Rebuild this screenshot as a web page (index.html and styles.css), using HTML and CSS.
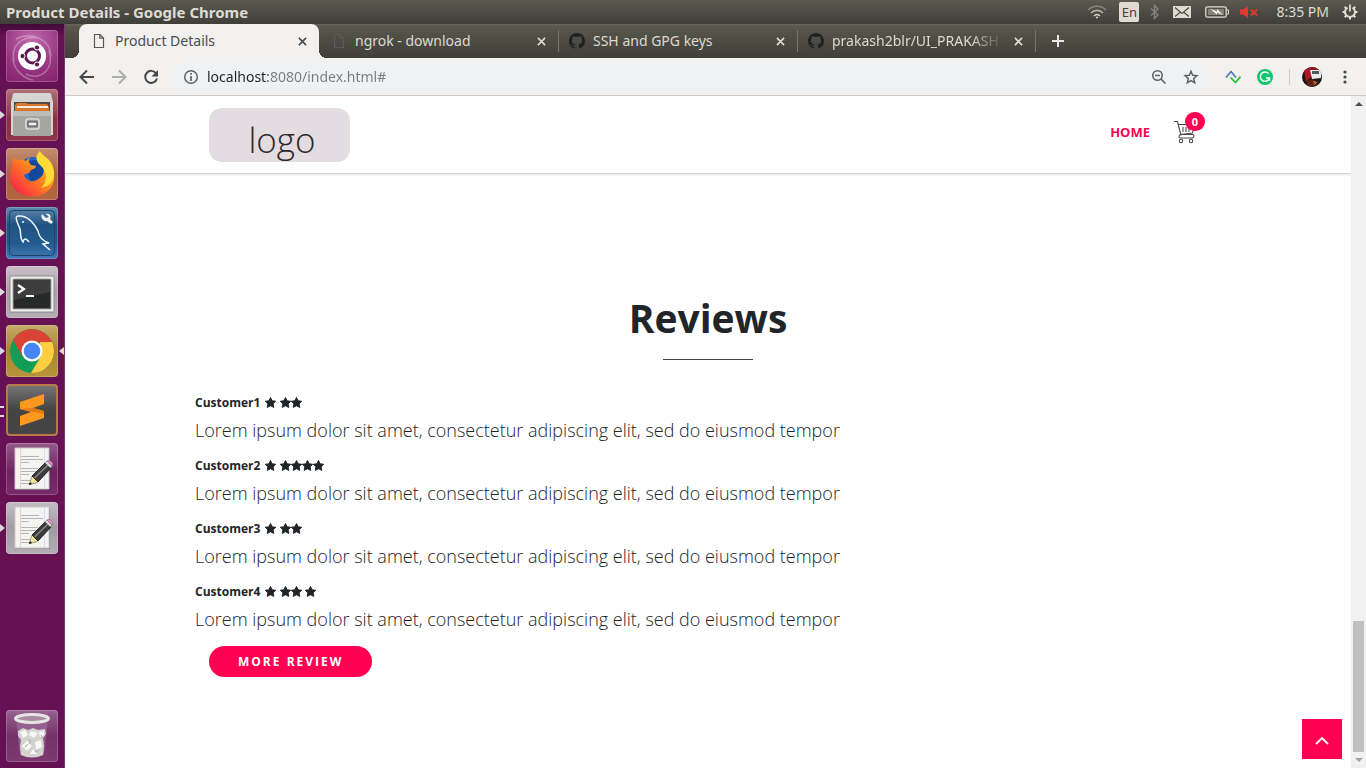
FILE: index.html
```html
<!DOCTYPE html>
<html lang="en">
<head>
<meta charset="utf-8">
<title>Product Details</title>
<link rel="stylesheet" href="styles.css">
</head>
<body>
<svg class="defs" aria-hidden="true">
  <defs>
    <symbol id="star" viewBox="0 0 24 24"><path d="M12 1l3.600 7.200 7.900 1.100-5.700 5.600 1.400 7.900L12 19.100l-7.200 3.700 1.400-7.900L.5 9.300l7.900-1.100z" stroke="#212529" stroke-width="2" stroke-linejoin="round"/></symbol>
    <symbol id="close" viewBox="0 0 10 10"><path d="M1 1l8 8M9 1L1 9" fill="none" stroke="currentColor" stroke-width="1.8"/></symbol>
    <symbol id="file" viewBox="0 0 12 16"><path d="M1.5 1.5h5.5l3.5 3.5v9.5h-9zM6.8 1.5v3.7h3.7" fill="none" stroke="currentColor" stroke-width="1.2"/></symbol>
    <symbol id="github" viewBox="0 0 16 16"><path d="M8 0C3.58 0 0 3.58 0 8c0 3.54 2.29 6.53 5.47 7.59.4.07.55-.17.55-.38v-1.49c-2.23.48-2.7-1.07-2.7-1.07-.36-.92-.89-1.17-.89-1.17-.73-.5.05-.49.05-.49.81.06 1.23.83 1.23.83.72 1.23 1.88.87 2.33.66.07-.52.28-.87.51-1.07-1.78-.2-3.64-.89-3.64-3.95 0-.87.31-1.59.82-2.15-.08-.2-.36-1.02.08-2.12 0 0 .67-.21 2.2.82a7.6 7.6 0 014 0c1.53-1.04 2.2-.82 2.2-.82.44 1.1.16 1.92.08 2.12.51.56.82 1.27.82 2.15 0 3.07-1.87 3.75-3.65 3.95.29.25.54.73.54 1.48v2.2c0 .21.15.46.55.38A8 8 0 0016 8c0-4.42-3.58-8-8-8z" fill="currentColor"/></symbol>
    <symbol id="notepad" viewBox="0 0 52 52">
      <path d="M9 6h35v41H9z" fill="#000" opacity=".25"/>
      <path d="M9 5h34v41H9z" fill="#f4f4f2" stroke="#c9c9c9"/>
      <path d="M14.500 5v41" stroke="#f5cccc"/><path d="M38.500 5v41" stroke="#d3dbf2"/>
      <path d="M15 13.500h18M15 16.500h22M15 19.500h8M15 25.500h17M15 28.500h18M15 31.500h8M15 37.500h14M15 40.500h15" stroke="#b5b5b5" stroke-width="1"/>
      <path d="M23 42l3-9 6 6z" fill="#efe3a0" stroke="#77734c" stroke-width=".6"/>
      <path d="M23 42l1-3 2 2z" fill="#111"/>
      <path d="M26 33L39 20l6 5-13 14z" fill="#3a3a3a" stroke="#111" stroke-width=".8"/><path d="M28.500 35L42 22" stroke="#888" stroke-width="1.500"/>
      <path d="M39 20l2-2 5 5-1.500 2z" fill="#ddd" stroke="#666" stroke-width=".6"/>
      <path d="M41 18c2-2 7 2 5.500 5z" fill="#e9a0d0" stroke="#a56490" stroke-width=".8"/>
    </symbol>
  </defs>
</svg>

<header class="panel">
  <span class="panel-title">Product Details - Google Chrome</span>
  <div class="indicators">
    <svg width="20" height="16" viewBox="0 0 20 16" fill="none" stroke-width="1.6"><path d="M1 6c5-5 13-5 18 0" stroke="#85837b"/><path d="M4 9c3.500-3.500 8.500-3.500 12 0" stroke="#b9b6ac"/><path d="M7 12c2-2 4-2 6 0" stroke="#dfdbd2"/><circle cx="10" cy="13.500" r="1" fill="#dfdbd2" stroke="none"/></svg>
    <span class="lang">En</span>
    <svg width="9" height="16" viewBox="0 0 9 16" fill="none" stroke="#85837b" stroke-width="1.400"><path d="M1 4.500l7 6.500-3.500 3.500v-13L8 5 1 11.500"/></svg>
    <svg class="mail" width="18" height="12" viewBox="0 0 18 12"><path d="M0 0h18v12H0z" fill="#dfdbd2"/><path d="M2 1.500l7 6 7-6M2 10.500l5-4M16 10.500l-5-4" fill="none" stroke="#4a4943" stroke-width="1.200"/></svg>
    <svg class="battery" width="24" height="12" viewBox="0 0 24 12"><rect x=".8" y=".8" width="20.400" height="10.400" rx="1.500" fill="none" stroke="#dfdbd2" stroke-width="1.300"/><path d="M22 4h1.500v4H22" fill="none" stroke="#dfdbd2"/><path d="M3 3h16v6H3z" fill="#85837b"/><path d="M5 2.500l7 3V2.800l6 6.500-6-2.800v2.300z" fill="#f1eee6"/></svg>
    <svg class="mute" width="18" height="12" viewBox="0 0 18 12"><path d="M0 3.500h3L8 0v12L3 8.500H0z" fill="#df382c"/><path d="M11 3.500l6 6m0-6l-6 6" stroke="#df382c" stroke-width="2"/></svg>
    <span class="clock">8:35 PM</span>
    <svg class="gear" width="16" height="16" viewBox="0 0 16 16" fill="none" stroke="#dfdbd2"><path d="M5.500 3.600a5 5 0 1 0 5 0" stroke-width="2"/><path d="M8 .5v7" stroke-width="1.800"/><path d="M.5 8H3m10 0h2.500M8 13v2.500M2.700 2.700l1.800 1.800m7 7l1.800 1.800m0-10.600l-1.800 1.800m-7 7l-1.800 1.800" stroke-width="2"/></svg>
  </div>
</header>

<div class="desktop">
  <nav class="launcher" aria-label="Launcher">
    <button class="tile ubuntu" aria-label="Dash"><svg viewBox="0 0 52 52"><g fill="none" stroke="#fff" opacity=".3"><path d="M8 32C4 15 17 5 32 8M20 44C35 52 49 38 43 20M10 9c15-8 34 0 35 17M7 28c0 12 12 21 20 22" stroke-width="1.500"/></g><circle cx="26" cy="26" r="14" fill="#fff"/><circle cx="26.500" cy="26" r="7" fill="none" stroke="#5e1750" stroke-width="3"/><g fill="#5e1750" stroke="#fff" stroke-width="1"><circle cx="16.500" cy="26" r="2.600"/><circle cx="31" cy="17.500" r="2.600"/><circle cx="31" cy="34.500" r="2.600"/></g></svg></button>
    <button class="tile files running" aria-label="Files"><svg viewBox="0 0 52 52"><path d="M7 5q0-1 2-1h34q2 0 2 1l2 8v33H5V13z" fill="#d5d5d3"/><path d="M8 13h36v9H8z" fill="#554c45"/><path d="M9 16q1-2 3-2h8l2 1h19l2 3v5H9z" fill="#d9772b"/><path d="M11 17h31v2H11z" fill="#f8ece0"/><path d="M7 22h38v25H7z" fill="#a5a5a3"/><path d="M7 22h38v5H7z" fill="#bcbcba"/><rect x="20" y="30" width="13" height="10" rx="2" fill="#999" stroke="#ddd" stroke-width="1.500"/><path d="M22 33h9v4h-9z" fill="#eee" stroke="#444"/></svg></button>
    <button class="tile firefox running" aria-label="Firefox"><svg viewBox="0 0 52 52"><defs><linearGradient id="ff" x1="1" x2="0" y1="0" y2="1"><stop offset="0" stop-color="#ffda35"/><stop offset=".45" stop-color="#ff8b1c"/><stop offset=".8" stop-color="#ff3a3d"/><stop offset="1" stop-color="#d91475"/></linearGradient></defs><circle cx="27" cy="25" r="16" fill="#1767c6"/><path d="M17 15q8-5 19-2l4 20-13 6z" fill="#12499e"/><path d="M8 9c1 2 2 3 4 3 3-1 6 0 8 1l4-4c-2 4-1 6 1 8l5 1c0 3-4 3-6 5-1 4-4 2-6 4 3 9 13 7 18 1 4-6 0-10-2-12C29 12 30 7 34 3c0 5 10 9 12 17 7 15-4 28-18 28C9 49 0 34 6 20c0-4 0-8 2-11z" fill="url(#ff)"/><path d="M34 3c-4 4-5 9 0 14 8 6 8 16 1 23 17-3 15-20 8-28-4-4-8-6-9-9z" fill="#ffdb36"/></svg></button>
    <button class="tile mysql running" aria-label="MySQL Workbench"><svg viewBox="0 0 52 52"><rect x="3.500" y="3.500" width="45" height="45" rx="4" fill="none" stroke="#1b4468"/><path d="M23 35c-3-4-5-4-6 0-3-3-2-8-3-13-2-5-6-13-2-13 9-1 16 7 20 15 1 7 5 10 11 12l-6 1 7 6" fill="none" stroke="#eef5fb" stroke-width="1.500"/><circle cx="17" cy="15" r="1" fill="#fff"/><path d="M36 7l4 4 3-1-3-3c3-1 6 2 4 5l3 3-2 2-4-3c-3 1-7-3-5-7z" fill="#f1f3f5"/></svg></button>
    <button class="tile terminal running" aria-label="Terminal"><svg viewBox="0 0 52 52"><path d="M4 10h44v36H4z" fill="#efefed" stroke="#8e8c8d"/><path d="M7 13h38v30H7z" fill="#282a29" stroke="#aaa"/><path d="M8 14h36v12L8 34z" fill="#3c3d3c"/><path d="M12 19l6 4-6 4" fill="none" stroke="#fff" stroke-width="2.200"/><path d="M20 30h8" stroke="#fff" stroke-width="2"/></svg></button>
    <button class="tile chrome running active" aria-label="Google Chrome"><svg viewBox="0 0 52 52"><circle cx="26" cy="26" r="22" fill="#129d57"/><path d="M7 15a22 22 0 0 1 39 2H26l-10 14z" fill="#da4336"/><path d="M46 17a22 22 0 0 1-21 31l10-17-1-14z" fill="#ffcd40"/><circle cx="26" cy="26" r="10.500" fill="#fff"/><circle cx="26" cy="26" r="8.300" fill="#4687f4"/></svg></button>
    <button class="tile sublime running double" aria-label="Sublime Text"><svg viewBox="0 0 52 52"><path d="M14 18l24-8v10l-11 4 11 3v7l-24 8V32l11-4-11-3z" fill="#ff9820"/><path d="M14 25l13-1 11 3v3z" fill="#e27a11"/></svg></button>
    <button class="tile editor" aria-label="Text Editor"><svg viewBox="0 0 52 52"><use href="#notepad"/></svg></button>
    <button class="tile editor-open running" aria-label="Document"><svg viewBox="0 0 52 52"><use href="#notepad"/></svg></button>
    <button class="tile trash" aria-label="Trash"><svg viewBox="0 0 52 52"><path d="M10 9h32l-4 36q-12 5-24 0z" fill="#a579a0" opacity=".55"/><path d="M12 21l5-3 5 2 5-2 5 2 7-1 1 5-3 4 1 8-1 9q-11 5-22 0l-1-8 1-7-3-4z" fill="#d3d3d0"/><path d="M14 22l5-2 3 5-5 3zM25 21l7 2-4 5-5-3zM33 22l5-1v5l-4 1zM16 36l5-5 5 5-5 5zM29 32l6-2 1 7-6 3zM24 44l3-5 4 5z" fill="#f8f8f6"/><path d="M22 29l3 2-2 3m12-9l2 4m-18 8l3-3m7 8l4-2" stroke="#aaa" fill="none"/><ellipse cx="26" cy="8.500" rx="16.500" ry="4" fill="#a78ba3" stroke="#e5e5e3" stroke-width="3"/></svg></button>
  </nav>

  <div class="browser">
    <div class="tabs">
      <div class="tab current"><svg class="favicon-file" viewBox="0 0 12 16"><use href="#file"/></svg><button class="tab-name">Product Details</button><button class="tab-close" aria-label="Close tab"><svg><use href="#close"/></svg></button></div>
      <div class="tab"><svg class="favicon-file" viewBox="0 0 12 16"><use href="#file"/></svg><button class="tab-name">ngrok - download</button><button class="tab-close" aria-label="Close tab"><svg><use href="#close"/></svg></button></div>
      <div class="tab"><svg class="favicon-git" viewBox="0 0 16 16"><use href="#github"/></svg><button class="tab-name">SSH and GPG keys</button><button class="tab-close" aria-label="Close tab"><svg><use href="#close"/></svg></button></div>
      <div class="tab"><svg class="favicon-git" viewBox="0 0 16 16"><use href="#github"/></svg><button class="tab-name fade">prakash2blr/UI_PRAKASH</button><button class="tab-close" aria-label="Close tab"><svg><use href="#close"/></svg></button></div>
      <button class="new-tab" aria-label="New tab"><svg viewBox="0 0 12 12"><path d="M6 0v12M0 6h12" stroke="#e9e7df" stroke-width="2"/></svg></button>
    </div>

    <div class="toolbar">
      <button aria-label="Back"><svg viewBox="0 0 16 16"><path d="M15 8H2M8 1.500L1.500 8 8 14.500" fill="none" stroke="#474747" stroke-width="2"/></svg></button>
      <button aria-label="Forward"><svg viewBox="0 0 16 16"><path d="M1 8h13M8 1.500L14.500 8 8 14.500" fill="none" stroke="#adadab" stroke-width="2"/></svg></button>
      <button aria-label="Reload"><svg viewBox="0 0 16 16"><path d="M13.200 4.500A6 6 0 1 0 14 9.500" fill="none" stroke="#474747" stroke-width="2"/><path d="M15 1v6.500H8.500z" fill="#474747"/></svg></button>
      <div class="address">
        <button aria-label="Site information"><svg viewBox="0 0 16 16"><circle cx="8" cy="8" r="6.300" fill="none" stroke="#5f6368" stroke-width="1.500"/><path d="M8 7v5M8 4v1.800" stroke="#5f6368" stroke-width="1.700"/></svg></button>
        <input class="url" type="text" aria-label="Address" value="localhost:8080/index.html#">
        <button aria-label="Zoom"><svg viewBox="0 0 16 16" fill="none" stroke="#5f6368" stroke-width="1.600"><circle cx="6.500" cy="6.500" r="4.700"/><path d="M10 10l4.500 4.500M4 6.500h5"/></svg></button>
        <button class="bookmark" aria-label="Bookmark"><svg viewBox="0 0 16 16"><path d="M8 2.200l1.700 4 4.300.4-3.300 2.900 1 4.200L8 11.500l-3.700 2.200 1-4.200L2 6.600l4.300-.4z" fill="none" stroke="#5f6368" stroke-width="1.500"/></svg></button>
      </div>
      <div class="extensions">
        <button aria-label="Extension"><svg viewBox="0 0 16 16" fill="none" stroke-width="1.700"><path d="M1 8.500l5-6 5 6" stroke="#5577b8"/><path d="M5.500 8.500l5 5 5-6" stroke="#18c522"/></svg></button>
        <button class="grammarly" aria-label="Grammarly"><svg viewBox="0 0 16 16"><circle cx="8" cy="8" r="8" fill="#11c46e"/><path d="M11.500 4.500A4.700 4.700 0 1 0 12.500 9H9M12.500 8.500v3.200" fill="none" stroke="#fff" stroke-width="1.500"/></svg></button>
        <span class="divider"></span>
        <button class="avatar" aria-label="Profile"><svg viewBox="0 0 20 20"><defs><clipPath id="round"><circle cx="10" cy="10" r="10"/></clipPath></defs><g clip-path="url(#round)"><path d="M0 0h20v20H0z" fill="#16191b"/><path d="M2 3l7-3v10l-5 5z" fill="#ae1724"/><path d="M9 0h11v3H8z" fill="#8c1620"/><path d="M8 3l11 0v8l-9 1z" fill="#e9eaec"/><path d="M10 4h7v3h-7z" fill="#50565c"/><path d="M4 14l6-2 4 2 2 6H6z" fill="#5a2412"/><path d="M11 14l5 1-4 3z" fill="#c06030"/></g></svg></button>
        <button aria-label="Menu"><svg viewBox="0 0 16 16" fill="#474747"><circle cx="8" cy="3" r="1.600"/><circle cx="8" cy="8" r="1.600"/><circle cx="8" cy="13" r="1.600"/></svg></button>
      </div>
    </div>

    <div class="viewport">
      <div class="page">
        <header class="site-header">
          <div class="container header-row">
            <a class="logo" href="#">logo</a>
            <nav class="site-nav">
              <a class="home" href="#">HOME</a>
              <a class="cart" href="#" aria-label="Cart"><svg viewBox="0 0 22 24" fill="none" stroke="#47494e" stroke-width="1.100"><path d="M0 1.500h3.500L7 15.500M4.300 4.500h16L18.500 13 6.500 14.500h12q1.500 0 1.500 1.500t-1.500 2h-12q-1.500 0-1.500-1.500t1.500-2M9 7v5M12 7v5M15 7v5"/><circle cx="7" cy="21" r="1.700"/><circle cx="17" cy="21" r="1.700"/></svg><span class="badge">0</span></a>
            </nav>
          </div>
        </header>
        <main class="container reviews">
          <h1>Reviews</h1>
          <article><h2>Customer1 <span class="stars"><svg><use href="#star"/></svg> <svg><use href="#star"/></svg><svg><use href="#star"/></svg></span></h2><p>Lorem ipsum dolor sit amet, consectetur adipiscing elit, sed do eiusmod tempor</p></article>
          <article><h2>Customer2 <span class="stars"><svg><use href="#star"/></svg> <svg><use href="#star"/></svg><svg><use href="#star"/></svg><svg><use href="#star"/></svg><svg><use href="#star"/></svg></span></h2><p>Lorem ipsum dolor sit amet, consectetur adipiscing elit, sed do eiusmod tempor</p></article>
          <article><h2>Customer3 <span class="stars"><svg><use href="#star"/></svg> <svg><use href="#star"/></svg><svg><use href="#star"/></svg></span></h2><p>Lorem ipsum dolor sit amet, consectetur adipiscing elit, sed do eiusmod tempor</p></article>
          <article><h2>Customer4 <span class="stars"><svg><use href="#star"/></svg> <svg><use href="#star"/></svg><svg><use href="#star"/></svg> <svg><use href="#star"/></svg></span></h2><p>Lorem ipsum dolor sit amet, consectetur adipiscing elit, sed do eiusmod tempor</p></article>
          <button class="more">MORE REVIEW</button>
        </main>
        <a class="to-top" href="#" aria-label="Back to top"><svg viewBox="0 0 14 8"><path d="M1 7l6-6 6 6" fill="none" stroke="#fff" stroke-width="1.800"/></svg></a>
      </div>
      <div class="scrollbar">
        <button aria-label="Scroll up"><svg viewBox="0 0 8 4"><path d="M0 4l4-4 4 4z" fill="#505050"/></svg></button>
        <div class="track"><div class="thumb"></div></div>
        <button aria-label="Scroll down"><svg viewBox="0 0 8 4"><path d="M0 0l4 4 4-4z" fill="#a0a0a0"/></svg></button>
      </div>
    </div>
  </div>
</div>
</body>
</html>
```
FILE: styles.css
```css
* { box-sizing: border-box; }
body {
  margin: 0;
  height: 100vh;
  display: flex;
  flex-direction: column;
  overflow: hidden;
  font-family: "Open Sans", "Noto Sans", sans-serif;
  color: #212529;
}
button { border: 0; padding: 0; margin: 0; background: none; font: inherit; color: inherit; }
svg { display: block; flex: none; }
a { text-decoration: none; }
.defs { position: absolute; width: 0; height: 0; }

/* system panel */
.panel {
  height: 24px;
  flex: none;
  display: flex;
  align-items: center;
  justify-content: space-between;
  padding: 0 8px 0 6px;
  background: linear-gradient(#5d5b50, #55534a 20%, #3f3e39);
  color: #dfdbd2;
  font-family: "Noto Sans", sans-serif;
  font-size: 14px;
  line-height: 24px;
}
.panel-title { font-size: 15px; font-weight: 700; line-height: 22px; }
.indicators { display: flex; align-items: center; }
.lang { background: #dfdbd2; color: #45443e; border-radius: 2px; width: 20px; height: 20px; line-height: 20px; text-align: center; font-size: 13px; margin: 0 11px 0 12px; }
.mail { margin-left: 14px; }
.battery { margin-left: 14px; }
.mute { margin-left: 11px; }
.clock { margin: 0 13px 0 18px; }

.desktop { flex: 1; display: flex; min-height: 0; }

/* launcher */
.launcher {
  width: 65px;
  flex: none;
  display: flex;
  flex-direction: column;
  gap: 7px;
  padding: 6px 0 6px 6px;
  background: linear-gradient(#3f0a37, #651154 12px, #651154);
  border-right: 1px solid #7d3a70;
}
.tile { position: relative; width: 52px; height: 52px; border-radius: 4px; box-shadow: inset 0 0 0 1px rgba(255, 255, 255, .2); }
.tile svg { width: 52px; height: 52px; }
.ubuntu { background: radial-gradient(circle at 50% 20%, #c16cae, #96357f 60%, #85206e); }
.files { background: linear-gradient(#b07078, #8b2f43 60%, #90354a); }
.firefox { background: linear-gradient(#c3906f, #ad6041 50%, #b4663e); }
.mysql { background: linear-gradient(#5d8bb0, #1f5280 35%, #235b90 70%, #4178b4); }
.terminal { background: linear-gradient(#c9c0c8, #aaa0a8 50%, #b6acb4); }
.chrome { background: linear-gradient(#c7ac6a, #a8822f 50%, #b8953c); }
.sublime { background: linear-gradient(#77777a, #444 50%, #444); box-shadow: inset 0 0 0 2px #b87a48; }
.editor { background: linear-gradient(#955a8b, #6d235f 55%, #782a69); }
.editor-open { background: linear-gradient(#c5bdc4, #a39ba2 50%, #b4acb4); }
.trash { margin-top: auto; background: linear-gradient(#96638e, #74316a 50%, #7c3972); }
.running::before { content: ""; position: absolute; left: -6px; top: 22px; border: 4px solid transparent; border-left: 5px solid #ded8dc; border-right: 0; }
.running.double::before { top: 22px; width: 4px; height: 7px; border: solid #ded8dc; border-width: 2px 0; }
.active::after { content: ""; position: absolute; right: -6px; top: 22px; border: 4px solid transparent; border-right: 5px solid #ded8dc; border-left: 0; }

/* tabs */
.browser { flex: 1; min-width: 0; display: flex; flex-direction: column; }
.tabs { height: 34px; flex: none; display: flex; padding-left: 14px; background: linear-gradient(#6a6858, #59584c 2px, #3f3e39); }
.tab {
  position: relative;
  flex: 0 1 239px;
  min-width: 0;
  display: flex;
  align-items: center;
  gap: 8px;
  padding: 0 11px 0 12px;
  color: #dddad2;
  font-family: "Noto Sans", sans-serif;
  font-size: 14px;
}
.tab + .tab:not(:nth-child(2)) { border-left: 1px solid; border-image: linear-gradient(transparent 7px, #77766c 7px, #77766c 27px, transparent 27px) 1; }
.tab:nth-child(4) { border-right: 1px solid; }
.tab.current { flex-basis: 240px; color: #4b4b4b; background: #f2f1f0; border-radius: 8px 8px 0 0; }
.current::before, .current::after { content: ""; position: absolute; bottom: 0; width: 8px; height: 8px; }
.current::before { left: -8px; background: radial-gradient(circle at 0 0, transparent 8px, #f2f1f0 8px); }
.current::after { right: -8px; background: radial-gradient(circle at 100% 0, transparent 8px, #f2f1f0 8px); }
.tab-name { flex: 1; min-width: 0; text-align: left; white-space: nowrap; overflow: hidden; line-height: 20px; }
.tab.current .tab-name, .favicon-file + .tab-name { padding-left: 2px; }
.fade { mask-image: linear-gradient(90deg, #000 80%, transparent); }
.tab-close { width: 12px; height: 12px; display: grid; place-items: center; }
.tab-close svg { width: 9px; height: 9px; }
.favicon-file { width: 12px; height: 16px; color: #5b5a55; margin-left: 2px; }
.favicon-git { width: 16px; height: 16px; color: #20201e; margin-left: -2px; }
.new-tab { padding: 0 16px; }
.new-tab svg { width: 12px; height: 12px; }

/* toolbar */
.toolbar { height: 38px; flex: none; display: flex; align-items: center; gap: 16px; padding: 0 13px 0 14px; background: #f2f1f0; border-bottom: 1px solid #cfcecc; }
.toolbar svg { width: 16px; height: 16px; }
.address { flex: 1; display: flex; align-items: center; gap: 8px; height: 28px; margin-left: -2px; padding: 0 8px 0 10px; border-radius: 14px; background: #eef2f4; }
.bookmark { margin-left: 8px; }
.url {
  flex: 1;
  min-width: 0;
  border: 0;
  padding: 0;
  outline: 0;
  font: 14px/20px "Noto Sans", sans-serif;
  color: transparent;
  background: linear-gradient(90deg, #222 61px, #777b80 61px) text;
}
.extensions { display: flex; align-items: center; gap: 16px; margin-left: 2px; }
.divider { width: 1px; height: 16px; background: #ccc; margin-right: -4px; }
.toolbar .avatar { margin-right: -1px; }
.toolbar .avatar svg { width: 20px; height: 20px; }

/* page */
.viewport { flex: 1; display: flex; min-height: 0; background: #fff; }
.page { position: relative; flex: 1; min-width: 0; overflow: hidden; }
.container { width: 80%; max-width: 1026px; margin: 0 auto; }
.site-header { border-bottom: 1px solid #d9d9d9; box-shadow: 0 1px 2px rgba(0, 0, 0, .1); }
.header-row { display: flex; align-items: center; justify-content: space-between; padding: 12px 25px 11px 14px; }
.logo { width: 141px; height: 54px; padding-left: 5px; border-radius: 13px; background: #e3dce1; color: #2e2a2d; font-size: 35px; font-weight: 300; line-height: 64px; text-align: center; }
.site-nav { display: flex; align-items: center; gap: 24px; padding-bottom: 6px; }
.home { color: #ff0052; font-size: 13px; font-weight: 700; line-height: 20px; }
.cart { position: relative; }
.cart svg { width: 22px; height: 24px; }
.badge { position: absolute; left: 11px; top: -8px; width: 20px; height: 19px; border-radius: 10px; background: #ff0052; color: #fff; font-size: 11px; font-weight: 700; line-height: 19px; text-align: center; }

.reviews { padding-top: 117px; }
h1 { margin: 0 0 32px; padding-bottom: 15px; font-size: 39px; line-height: 54px; font-weight: 700; text-align: center; background: linear-gradient(#3f4449, #3f4449) center bottom / 90px 1px no-repeat; }
h2 { margin: 0; font-size: 12px; line-height: 21px; font-weight: 700; }
article { padding-bottom: 9px; }
p { margin: 0; padding-top: 1px; font-size: 18px; line-height: 32px; font-weight: 300; }
.stars { margin-left: 2px; }
.stars svg { display: inline-block; width: 11px; height: 11px; vertical-align: -1px; fill: #212529; overflow: visible; }
.more { margin: 2px 0 0 14px; height: 31px; padding: 0 29px; border-radius: 16px; background: #ff0052; color: #fff; font-size: 12px; font-weight: 700; letter-spacing: 2px; }
.to-top { position: absolute; right: 9px; bottom: 9px; width: 40px; height: 40px; display: grid; place-items: center; padding-top: 4px; background: #ff0052; }
.to-top svg { width: 14px; height: 8px; }

.scrollbar { width: 15px; flex: none; display: flex; flex-direction: column; background: #f1f1f1; }
.scrollbar button { height: 16px; display: grid; place-items: center; }
.scrollbar svg { width: 8px; height: 4px; }
.track { flex: 1; display: flex; flex-direction: column; justify-content: flex-end; }
.thumb { height: 131px; margin: 0 2px; background: #c1c1c1; }
```
